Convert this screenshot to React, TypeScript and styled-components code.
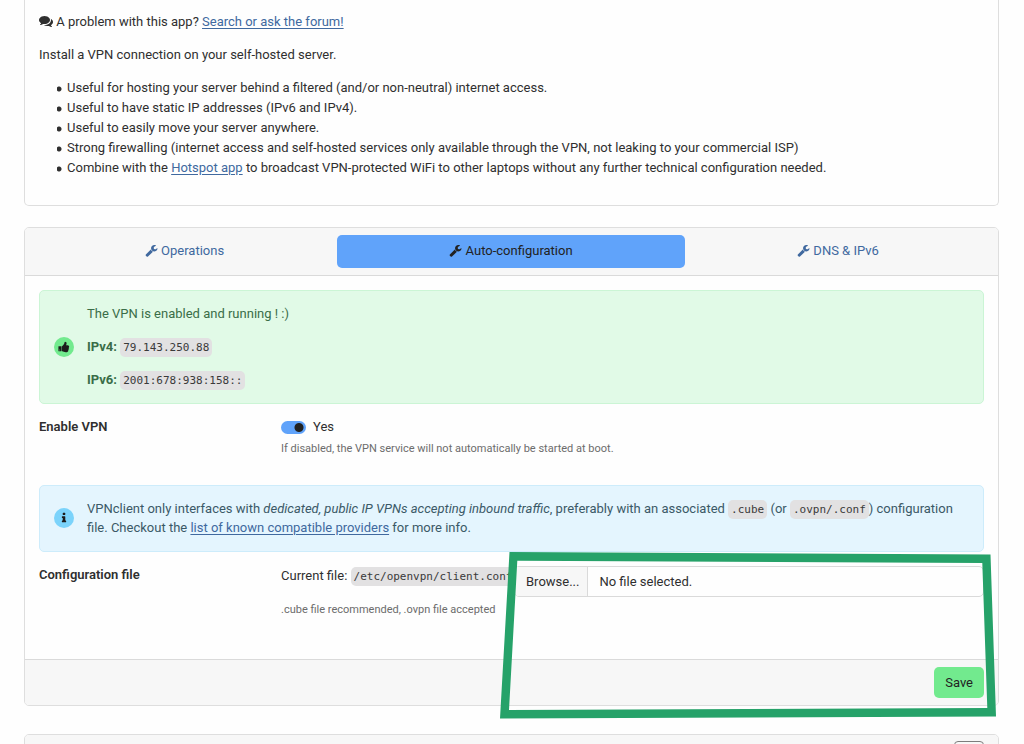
import React from "react";
import styled, { createGlobalStyle } from "styled-components";

const GlobalStyle = createGlobalStyle`
  * { box-sizing: border-box; }
  body {
    margin: 0;
    overflow: hidden;
    background: #fefefe;
    color: #2f2f2f;
    font: 13px/20px Roboto, "Open Sans", sans-serif;
  }
  p, ul { margin: 0 0 13px; }
  a { color: #40699f; text-underline-offset: 2px; }
`;

const Shell = styled.main`
  position: relative;
  height: 100vh;
  overflow: hidden;
  padding: 0 25px 0 24px;
`;

const Card = styled.section`
  border: 1px solid #dedede;
  border-radius: 5px;
  margin-bottom: 28px;
  overflow: hidden;
`;

const DescriptionCard = styled(Card)`
  border-top: 0;
  border-radius: 0 0 5px 5px;
  padding: 12px 14px;
  margin-bottom: 21px;
`;

const FeatureList = styled.ul`
  padding-left: 18px;
  margin-bottom: 15px;
  list-style: none;
  li {
    padding-left: 10px;
    background: radial-gradient(circle at 2px 11px, #2f2f2f 2px, transparent 3px);
  }
`;

const Glyph = styled.svg<{ $size: number }>`
  width: ${(p) => p.$size}px;
  height: ${(p) => p.$size}px;
  fill: currentColor;
  vertical-align: -2px;
`;

const Tabs = styled.nav`
  display: grid;
  grid-template-columns: 305fr 348fr 306fr;
  padding: 7px;
  background: #f7f7f7;
  border-bottom: 1px solid #dadada;
`;

const Tab = styled.button<{ $active?: boolean }>`
  height: 33px;
  padding: 0 13px 2px;
  border: 0;
  border-radius: 5px;
  background: ${(p) => (p.$active ? "#60a3fa" : "transparent")};
  color: ${(p) => (p.$active ? "#222222" : "#40699f")};
  font: inherit;
`;

const Body = styled.div`
  padding: 14px 14px 13px;
`;

const Alert = styled.div<{ $tone: "success" | "info" }>`
  display: flex;
  align-items: center;
  gap: 13px;
  min-height: 67px;
  padding: ${(p) => (p.$tone === "success" ? "13px 14px" : "12px 14px 14px")};
  margin-bottom: 13px;
  border: 1px solid ${(p) => (p.$tone === "success" ? "#cbf5d5" : "#cdecfb")};
  border-radius: 5px;
  background: ${(p) => (p.$tone === "success" ? "#e1fae7" : "#e4f5fe")};
  color: ${(p) => (p.$tone === "success" ? "#3a6d48" : "#3b5967")};
  line-height: ${(p) => (p.$tone === "success" ? "20px" : "19px")};
  p:last-child { margin-bottom: 0; }
`;

const Badge = styled.span<{ $color: string }>`
  display: flex;
  flex: none;
  align-items: center;
  justify-content: center;
  width: 20px;
  height: 20px;
  border-radius: 50%;
  background: ${(p) => p.$color};
  color: #1c1c1c;
`;

const Code = styled.code`
  padding: 3px;
  border-radius: 5px;
  background: #e2e1e2;
  color: #3a3a3a;
  font: 11px/14px "DejaVu Sans Mono", monospace;
`;

const Row = styled.div`
  display: grid;
  grid-template-columns: 242fr 703fr;
  margin-bottom: 27px;
`;

const RowLabel = styled.label`
  font-weight: 600;
`;

const SwitchLine = styled.label`
  display: flex;
  align-items: center;
  gap: 7px;
`;

const Switch = styled.input`
  appearance: none;
  width: 25px;
  height: 13px;
  margin: 0;
  border-radius: 7px;
  background: radial-gradient(circle at 18px 50%, #222222 4px, transparent 5px) #60a3fa;
`;

const Help = styled.small`
  display: block;
  margin-top: 3px;
  color: #6c6c6c;
  font-size: 11px;
  line-height: 18px;
`;

const FileLine = styled.div`
  display: grid;
  grid-template-columns: minmax(0, 233fr) minmax(0, 470fr);
  padding: 1px 0;
  white-space: nowrap;
`;

const FilePicker = styled.label`
  position: relative;
  display: flex;
  z-index: 1;
  height: 31px;
  border: 1px solid #dadada;
  border-radius: 5px;
  background: #fefefe;
  line-height: 29px;
  overflow: hidden;
`;

const HiddenFile = styled.input`
  position: absolute;
  inset: 0;
  opacity: 0;
`;

const BrowsePart = styled.span`
  padding: 0 8px 0 11px;
  border-right: 1px solid #dadada;
  background: #f7f7f7;
`;

const FileName = styled.span`
  padding-left: 11px;
`;

const Footer = styled.footer`
  display: flex;
  justify-content: flex-end;
  padding: 7px 14px;
  border-top: 1px solid #dadada;
  background: #f7f7f7;
`;

const Save = styled.button`
  height: 31px;
  padding: 0 11px;
  border: 0;
  border-radius: 5px;
  background: #72ea8e;
  color: #222222;
  font: inherit;
`;

const PanelHeader = styled.header`
  display: flex;
  justify-content: flex-end;
  padding: 6px 14px;
  background: #f7f7f7;
`;

const Collapse = styled.button`
  width: 30px;
  height: 26px;
  border: 1px solid #7d7d7d;
  border-radius: 4px;
  background: transparent;
`;

const Highlight = styled.svg`
  position: absolute;
  z-index: 2;
  top: 551px;
  right: 27px;
  width: 498px;
  height: 169px;
  pointer-events: none;
`;

const paths = {
  wrench:
    "M1092 1052l-682 682q-37 37-90 37-52 0-91-37l-106-108q-38-36-38-90 0-53 38-91l681-681q39 98 114.5 173.5t173.5 114.5zm634-435q0 39-23 106-47 134-164.5 217.5t-258.5 83.5q-185 0-316.5-131.5t-131.5-316.5 131.5-316.5 316.5-131.5q58 0 121.5 16.5t107.5 46.5q16 11 16 28t-16 28l-293 169v224l193 107q5-3 79-48.5t135.5-81 70.5-35.5q15 0 23.5 10t8.5 25z",
  comments:
    "M1408 768q0 139-94 257t-256.5 186.5-353.5 68.5q-86 0-176-16-124 88-278 128-36 9-86 16h-3q-11 0-20.5-8t-11.5-21q-1-3-1-6.5t.5-6.5 2-6l2.5-5 3.5-5.5 4-5 4.5-5 4-4.5q5-6 23-25t26-29.5 22.5-29 25-38.5 20.5-44q-124-72-195-177t-71-224q0-139 94-257t256.5-186.5 353.5-68.5 353.5 68.5 256.5 186.5 94 257zm384 256q0 120-71 224.5t-195 176.5q10 24 20.5 44t25 38.5 22.5 29 26 29.5 23 25q1 1 4 4.5t4.5 5 4 5 3.5 5.5l2.5 5 2 6 .5 6.5-1 6.5q-3 14-13 22t-22 7q-50-7-86-16-154-40-278-128-90 16-176 16-271 0-472-132 58 4 88 4 161 0 309-45t264-129q125-92 192-212t67-254q0-77-23-152 129 71 204 178t75 230z",
  thumbsUp:
    "M320 1344q0-26-19-45t-45-19q-27 0-45.5 19t-18.5 45q0 27 18.5 45.5t45.5 18.5q26 0 45-18.5t19-45.5zm160-512v640q0 26-19 45t-45 19h-288q-26 0-45-19t-19-45v-640q0-26 19-45t45-19h288q26 0 45 19t19 45zm1184 0q0 86-55 149 15 44 15 76 3 76-43 137 17 56 0 117-15 57-54 94 9 112-49 181-64 76-197 78h-129q-66 0-144-15.5t-121.5-29-120.5-39.5q-123-43-158-44-26-1-45-19.5t-19-44.5v-641q0-25 18-43.5t43-20.5q24-2 76-59t101-121q68-87 101-120 18-18 31-48t17.5-48.5 13.5-60.5q7-39 12.5-61t19.5-52 34-50q19-19 45-19 46 0 82.5 10.5t60 26 40 40.5 24 45 12 50 5 45 .5 39q0 38-9.5 76t-19 60-27.5 56q-3 6-10 18t-11 22-8 24h277q78 0 135 57t57 135z",
  info: "M1216 1344v128q0 26-19 45t-45 19h-512q-26 0-45-19t-19-45v-128q0-26 19-45t45-19h64v-384h-64q-26 0-45-19t-19-45v-128q0-26 19-45t45-19h384q26 0 45 19t19 45v576h64q26 0 45 19t19 45zm-128-1152v192q0 26-19 45t-45 19h-256q-26 0-45-19t-19-45v-192q0-26 19-45t45-19h256q26 0 45 19t19 45z",
};

const Icon = ({ name, size = 14 }: { name: keyof typeof paths; size?: number }) => (
  <Glyph $size={size} viewBox="0 0 1792 1792" aria-hidden="true">
    <path d={paths[name]} />
  </Glyph>
);

export default function App() {
  return (
    <>
      <GlobalStyle />
      <Shell>
        <DescriptionCard>
          <p>
            <Icon name="comments" /> A problem with this app? <a href="#forum">Search or ask the forum!</a>
          </p>
          <p>Install a VPN connection on your self-hosted server.</p>
          <FeatureList>
            <li>Useful for hosting your server behind a filtered (and/or non-neutral) internet access.</li>
            <li>Useful to have static IP addresses (IPv6 and IPv4).</li>
            <li>Useful to easily move your server anywhere.</li>
            <li>Strong firewalling (internet access and self-hosted services only available through the VPN, not leaking to your commercial ISP)</li>
            <li>
              Combine with the <a href="#hotspot">Hotspot app</a> to broadcast VPN-protected WiFi to other laptops without any further technical configuration needed.
            </li>
          </FeatureList>
        </DescriptionCard>

        <Card>
          <Tabs>
            <Tab type="button"><Icon name="wrench" size={13} /> Operations</Tab>
            <Tab type="button" $active><Icon name="wrench" size={13} /> Auto-configuration</Tab>
            <Tab type="button"><Icon name="wrench" size={13} /> DNS &amp; IPv6</Tab>
          </Tabs>
          <Body>
            <Alert $tone="success">
              <Badge $color="#72ea8e"><Icon name="thumbsUp" size={12} /></Badge>
              <div>
                <p>The VPN is enabled and running ! :)</p>
                <p><b>IPv4:</b> <Code>79.143.250.88</Code></p>
                <p><b>IPv6:</b> <Code>2001:678:938:158::</Code></p>
              </div>
            </Alert>
            <Row>
              <RowLabel htmlFor="enable">Enable VPN</RowLabel>
              <div>
                <SwitchLine>
                  <Switch id="enable" type="checkbox" role="switch" defaultChecked /> Yes
                </SwitchLine>
                <Help>If disabled, the VPN service will not automatically be started at boot.</Help>
              </div>
            </Row>
            <Alert $tone="info">
              <Badge $color="#7bd3fb"><Icon name="info" size={12} /></Badge>
              <p>
                VPNclient only interfaces with <em>dedicated, public IP VPNs accepting inbound traffic</em>, preferably with an associated <Code>.cube</Code> (or <Code>.ovpn/.conf</Code>) configuration file. Checkout the <a href="#providers">list of known compatible providers</a> for more info.
              </p>
            </Alert>
            <Row>
              <RowLabel htmlFor="config">Configuration file</RowLabel>
              <div>
                <FileLine>
                  <span>Current file: <Code>/etc/openvpn/client.conf</Code></span>
                  <FilePicker>
                    <HiddenFile id="config" type="file" />
                    <BrowsePart>Browse...</BrowsePart>
                    <FileName>No file selected.</FileName>
                  </FilePicker>
                </FileLine>
                <Help>.cube file recommended, .ovpn file accepted</Help>
              </div>
            </Row>
          </Body>
          <Footer>
            <Save type="button">Save</Save>
          </Footer>
        </Card>

        <Card>
          <PanelHeader>
            <Collapse type="button" aria-label="Collapse" />
          </PanelHeader>
        </Card>

        <Highlight viewBox="499 551 498 169" aria-hidden="true">
          <path
            fill="#26a269"
            fillRule="evenodd"
            d="M509.500 552L990.500 554.500L996 716.500L500 718.500ZM517.300 560.700L509 710L987.300 708L982.300 563Z"
          />
        </Highlight>
      </Shell>
    </>
  );
}
